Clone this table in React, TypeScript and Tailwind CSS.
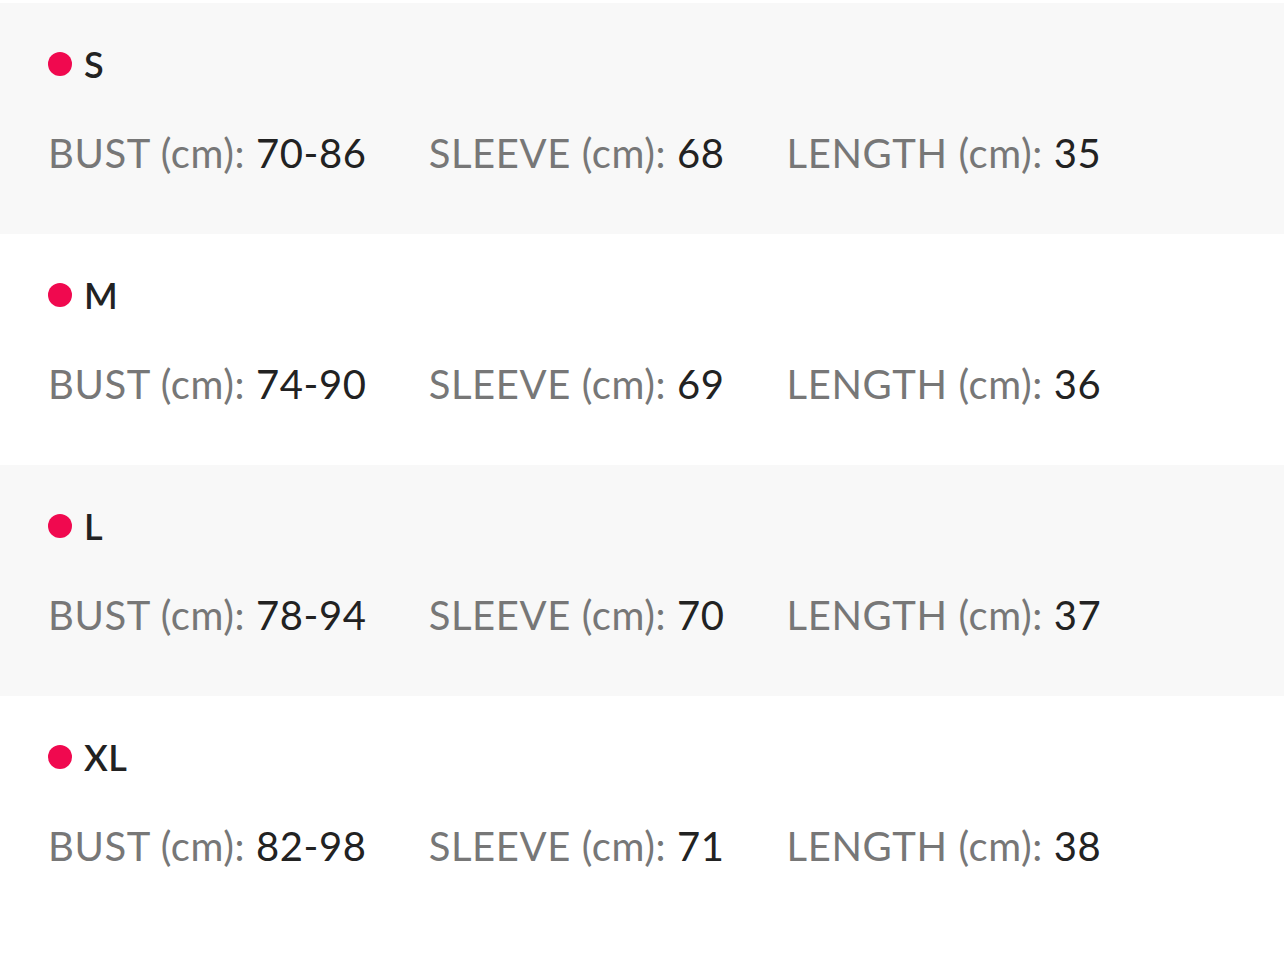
const sizes = [
  { name: "S", bust: "70-86", sleeve: "68", length: "35" },
  { name: "M", bust: "74-90", sleeve: "69", length: "36" },
  { name: "L", bust: "78-94", sleeve: "70", length: "37" },
  { name: "XL", bust: "82-98", sleeve: "71", length: "38" },
];

function Measure({ label, value }: { label: string; value: string }) {
  return (
    <div className="whitespace-nowrap">
      <span className="text-[#777777]">{label} (cm): </span>
      <span className="text-[#222222]">{value}</span>
    </div>
  );
}

export default function App() {
  return (
    <div className="min-h-screen bg-white pt-[3px] font-['Lato',sans-serif]">
      {sizes.map((s, i) => (
        <div
          key={s.name}
          className={`h-[231px] pl-12 pt-[37px] ${i % 2 === 0 ? "bg-[#f8f8f8]" : "bg-white"}`}
        >
          <div className="flex items-center gap-3 h-12">
            <span className="w-6 h-6 rounded-full bg-[#f0094f]" />
            <span className="text-[36px] font-semibold text-[#222222] leading-none tracking-[0.5px]">{s.name}</span>
          </div>
          <div className="mt-[45px] flex gap-[62px] text-[40px] leading-none tracking-[0.6px]">
            <Measure label="BUST" value={s.bust} />
            <Measure label="SLEEVE" value={s.sleeve} />
            <Measure label="LENGTH" value={s.length} />
          </div>
        </div>
      ))}
    </div>
  );
}
